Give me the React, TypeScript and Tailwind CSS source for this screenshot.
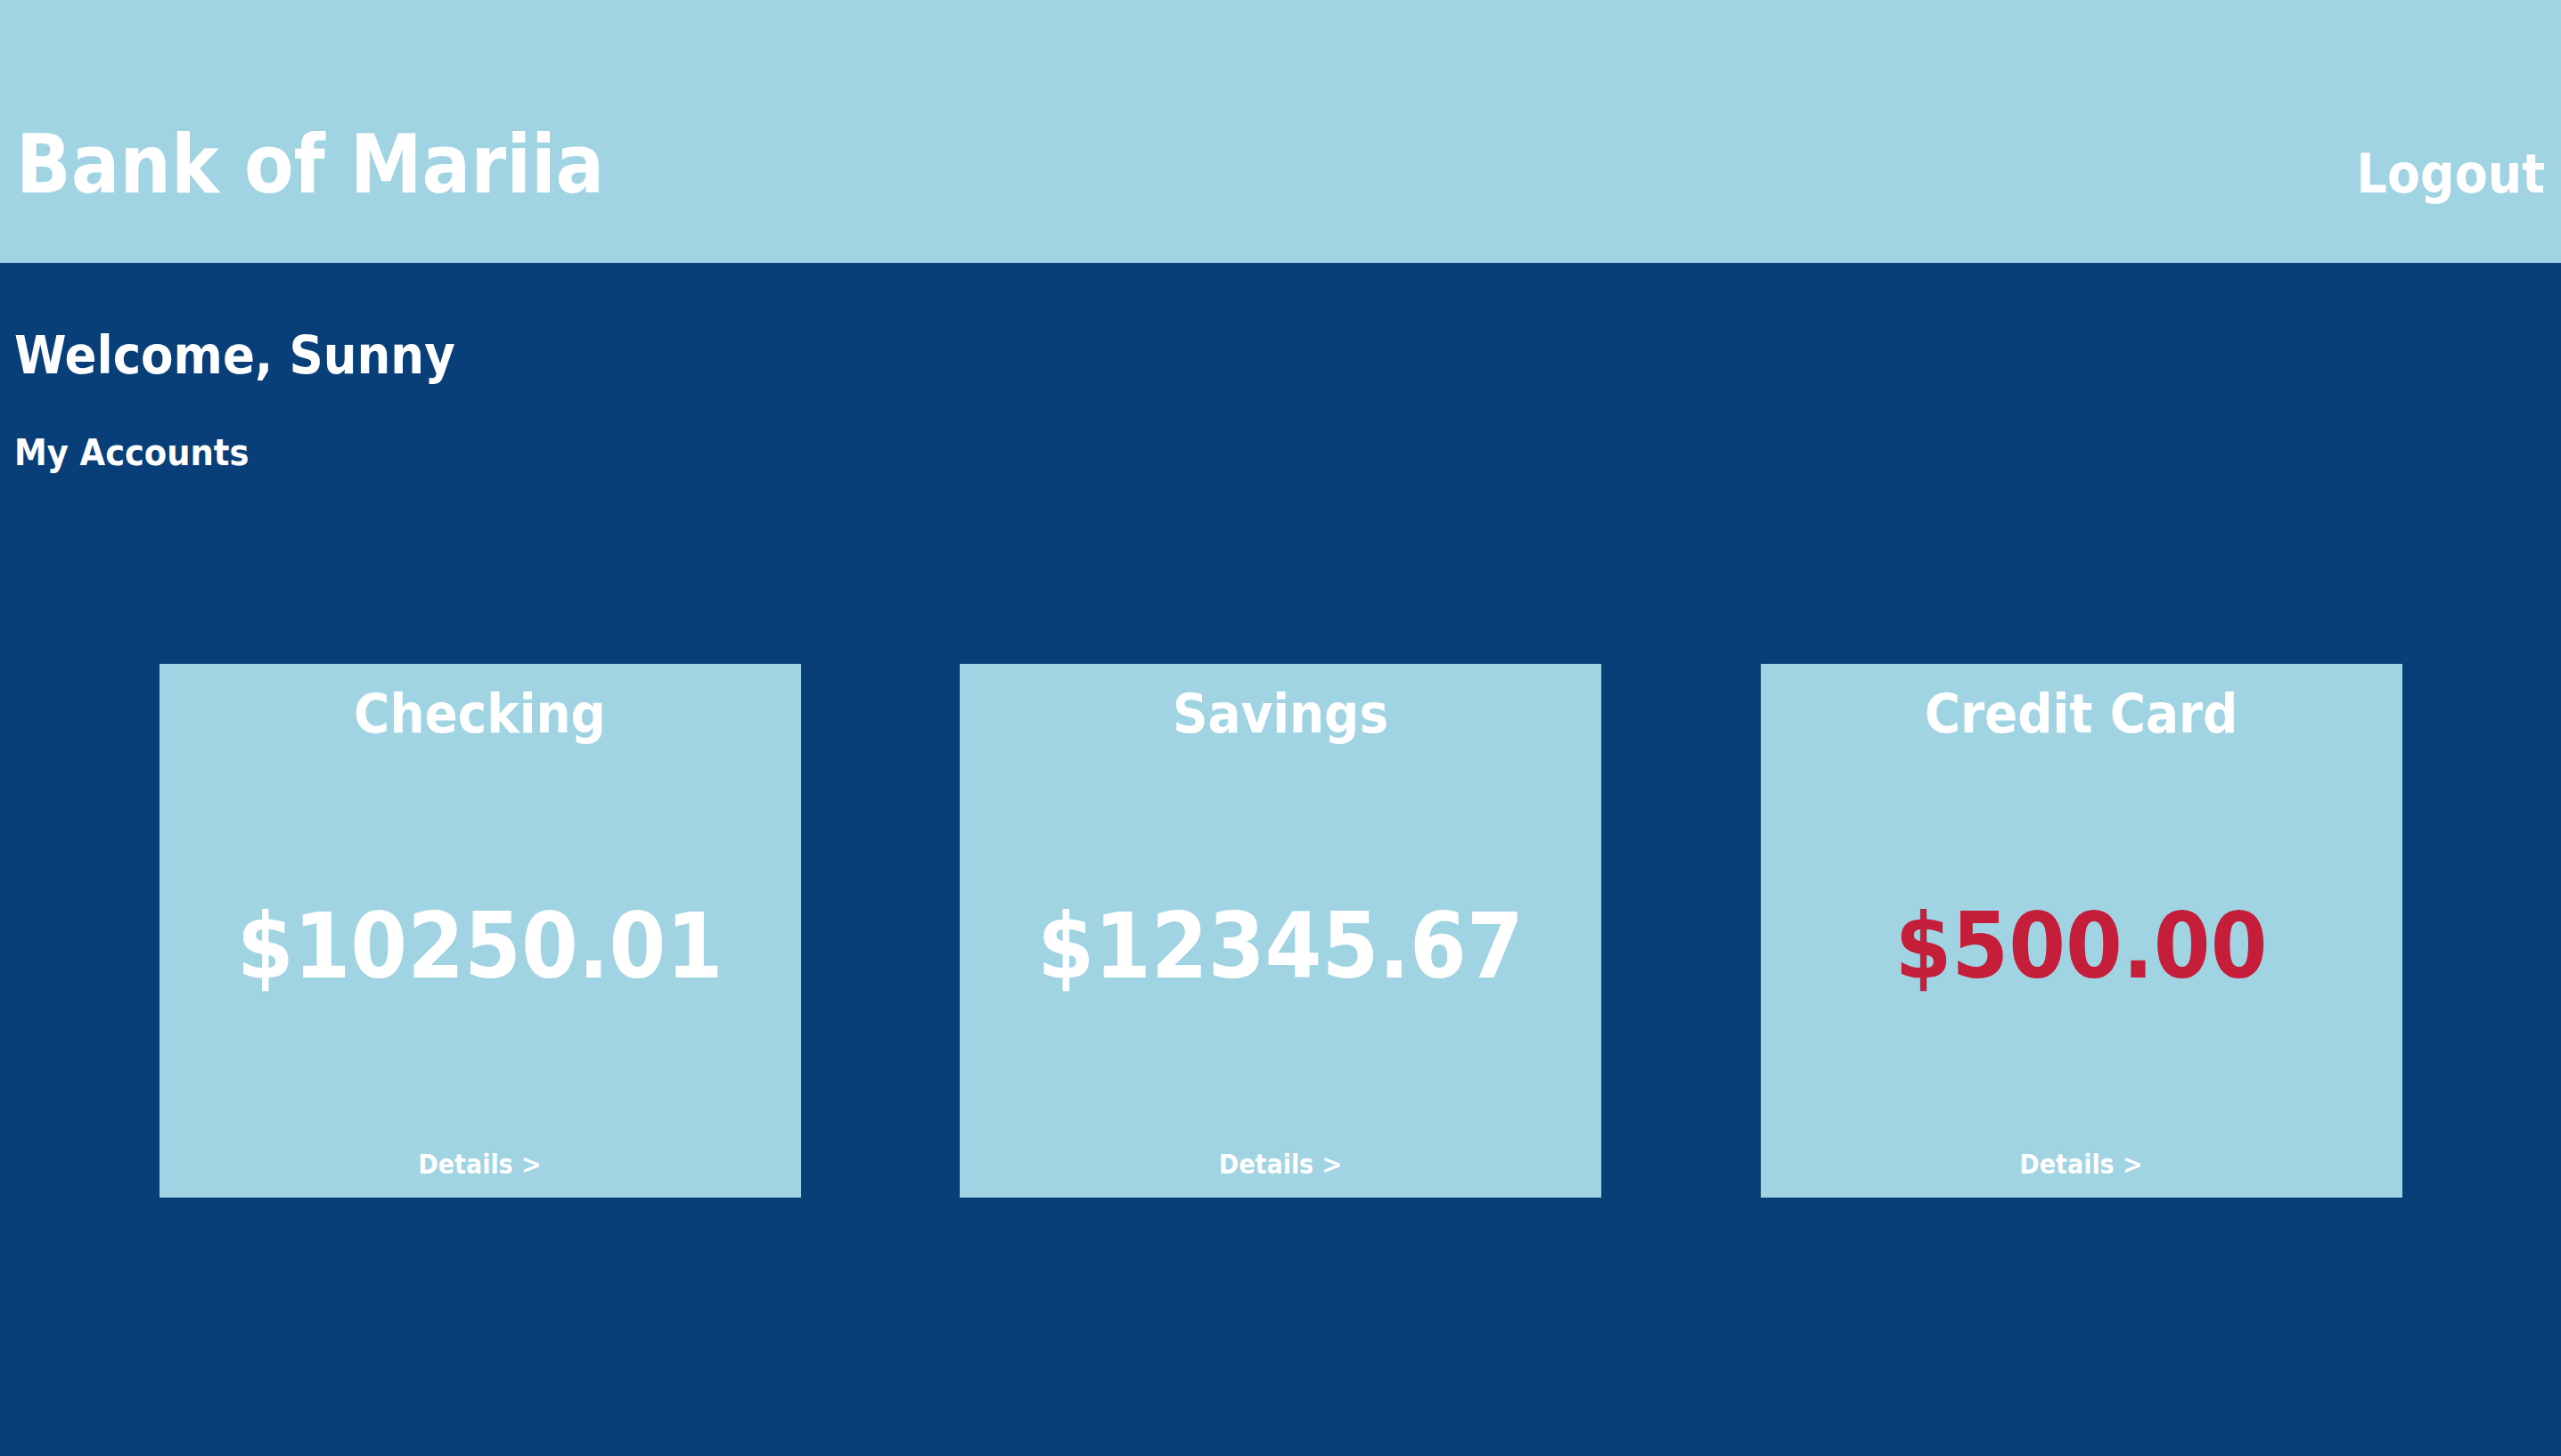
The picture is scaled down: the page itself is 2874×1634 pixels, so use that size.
import React from "react";

const accounts = [
  { name: "Checking", amount: "$10250.01", negative: false },
  { name: "Savings", amount: "$12345.67", negative: false },
  { name: "Credit Card", amount: "$500.00", negative: true },
];

const font = "font-['DejaVu_Sans_Condensed','DejaVu_Sans',sans-serif] font-stretch-condensed";

const AccountCard = ({ name, amount, negative }: { name: string; amount: string; negative: boolean }) => (
  <div className="flex h-[599px] w-[720px] flex-col items-center bg-[#a1d4e2] pt-[25px] pb-[22px] text-white">
    <h3 className="text-[61px] leading-none font-bold">{name}</h3>
    <div className="flex flex-1 items-center">
      <span className={`text-[102px] leading-none font-bold ${negative ? "text-[#c41e3a]" : "text-white"}`}>
        {amount}
      </span>
    </div>
    <a className="text-[30px] leading-none font-bold">Details &gt;</a>
  </div>
);

const App = () => {
  return (
    <div className={`min-h-screen w-full bg-[#083f78] ${font}`}>
      <header className="flex h-[295px] items-end bg-[#a1d4e2] px-[18px] pb-[65px] text-white">
        <div className="flex w-full items-baseline justify-between">
          <h1 className="text-[90px] leading-none font-bold">Bank of Mariia</h1>
          <button className="text-[60px] leading-none font-bold">Logout</button>
        </div>
      </header>

      <main className="px-[16px] text-white">
        <h2 className="mt-[74px] text-[59px] leading-none font-bold">Welcome, Sunny</h2>
        <p className="mt-[60px] text-[41px] leading-none font-bold">My Accounts</p>
      </main>

      <section className="mt-[216px] flex justify-evenly">
        {accounts.map((account) => (
          <AccountCard key={account.name} {...account} />
        ))}
      </section>
    </div>
  );
};

export default App;
